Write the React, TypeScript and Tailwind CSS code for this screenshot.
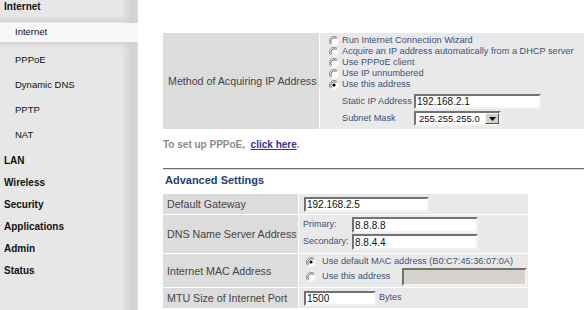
import React from 'react';

const Radio = ({ checked = false }: { checked?: boolean }) => (
    <svg width="10" height="10" viewBox="0 0 12 12" className="shrink-0">
        <circle cx="6" cy="6" r="4.6" fill="#ffffff" />
        <path d="M10 2 A5.5 5.5 0 0 0 2 10" fill="none" stroke="#8a8a8a" strokeWidth="1.1" />
        <path d="M2 10 A5.5 5.5 0 0 0 10 2" fill="none" stroke="#f6f6f6" strokeWidth="1.1" />
        <path d="M9 3 A4.3 4.3 0 0 0 3 9" fill="none" stroke="#4a4a4a" strokeWidth="1" />
        {checked && <circle cx="6" cy="6" r="1.9" fill="#000000" />}
    </svg>
);

const Field = ({ value = '', width, height = 15, disabled = false }: { value?: string; width: number; height?: number; disabled?: boolean }) => (
    <input
        readOnly
        value={value}
        style={{ width, height }}
        className={`shrink-0 border-2 border-t-[#727272] border-l-[#727272] border-r-[#f2f2f2] border-b-[#f2f2f2] px-[1px] text-[10px] leading-none text-[#111] outline-none ${disabled ? 'bg-[#d6d3cc]' : 'bg-white'}`}
    />
);

const Select = () => (
    <div className="flex h-[15px] w-[87px] shrink-0 border-2 border-t-[#727272] border-l-[#727272] border-r-[#f2f2f2] border-b-[#f2f2f2] bg-white">
        <span className="flex-1 overflow-hidden whitespace-nowrap pl-[3px] text-[9.5px] leading-[11px] text-[#111]">255.255.255.0</span>
        <div className="flex w-[14px] items-center justify-center border border-t-[#f4f4f4] border-l-[#f4f4f4] border-r-[#555] border-b-[#555] bg-[#d4d0c8]">
            <svg width="7" height="4" viewBox="0 0 7 4">
                <path d="M0 0 H7 L3.5 4 Z" fill="#000" />
            </svg>
        </div>
    </div>
);

const options = [
    'Run Internet Connection Wizard',
    'Acquire an IP address automatically from a DHCP server',
    'Use PPPoE client',
    'Use IP unnumbered',
    'Use this address',
];

const Sidebar = () => (
    <aside className="h-full w-[138px] shrink-0 bg-[linear-gradient(to_right,#e7e7e7_88%,#d0d0d0_96%,#dadada)] text-[#111]">
        <div className="h-[22px] bg-[linear-gradient(to_bottom,transparent_70%,#d3d3d3)] pl-[4px] pt-[1px] text-[10px] font-bold leading-[12px]">
            Internet
        </div>
        <div className="mt-[1px] flex h-[19px] items-center bg-[#f8f8f8] pl-[15px] text-[9.5px]">Internet</div>
        <div className="bg-[linear-gradient(to_bottom,#d4d4d4,transparent_7px)] pt-[6px] text-[9.5px]">
            {['PPPoE', 'Dynamic DNS', 'PPTP', 'NAT'].map((item) => (
                <div key={item} className="flex h-[25px] items-center pl-[15px]">
                    {item}
                </div>
            ))}
        </div>
        <div className="mt-[1px] text-[10px] font-bold">
            {['LAN', 'Wireless', 'Security', 'Applications', 'Admin', 'Status'].map((item) => (
                <div key={item} className="flex h-[22px] items-center pl-[4px]">
                    {item}
                </div>
            ))}
        </div>
    </aside>
);

export default function App() {
    return (
        <div className="flex h-[310px] w-[584px] overflow-hidden bg-white [font-family:'Liberation_Sans',Arial,sans-serif]">
            <Sidebar />
            <main className="min-w-0 flex-1 pl-[25px] pt-[33px]">
                {/* method of acquiring */}
                <div className="flex h-[96px] w-[422px] gap-[1px]">
                    <div className="flex w-[156px] items-center bg-[#dcdcdc] pl-[5px] text-[10.67px] text-[#454545]">
                        Method of Acquiring IP Address
                    </div>
                    <div className="flex-1 bg-[#e9e9e9] pl-[9px] pt-[2px] text-[9.2px] text-[#3c5279]">
                        {options.map((o, i) => (
                            <div key={o} className="flex h-[11px] items-center gap-[3px] leading-none">
                                <Radio checked={i === 4} />
                                <span>{o}</span>
                            </div>
                        ))}
                        <div className="mt-[3px] pl-[13px]">
                            <div className="flex h-[17px] items-center">
                                <span className="w-[72px]">Static IP Address</span>
                                <Field value="192.168.2.1" width={127} />
                            </div>
                            <div className="flex h-[17px] items-center">
                                <span className="w-[72px]">Subnet Mask</span>
                                <Select />
                            </div>
                        </div>
                    </div>
                </div>

                <p className="mt-[10px] text-[10px] font-bold leading-[12px] text-[#8c8c8c]">
                    To set up PPPoE,&nbsp; <span className="text-[#333399] underline">click here</span>.
                </p>

                <div className="mt-[17px] h-[2px] w-[422px] border-t border-t-[#6f6f6f] bg-[#d8d8d8]" />

                <h3 className="mt-[4px] pl-[2px] text-[11px] font-bold leading-[13px] text-[#233f78]">Advanced Settings</h3>

                {/* advanced settings */}
                <div className="mt-[7px] flex w-[365px] flex-col gap-[1px] text-[10.67px] text-[#454545]">
                    <div className="flex h-[20px] gap-[1px]">
                        <div className="flex w-[135px] items-center bg-[#dcdcdc] pl-[4px]">Default Gateway</div>
                        <div className="flex flex-1 items-center bg-[#e9e9e9] pl-[5px]">
                            <Field value="192.168.2.5" width={125} />
                        </div>
                    </div>
                    <div className="flex h-[38px] gap-[1px]">
                        <div className="flex w-[135px] items-center bg-[#dcdcdc] pl-[4px]">DNS Name Server Address</div>
                        <div className="flex flex-1 flex-col gap-[1px] bg-[#e9e9e9] pl-[4px] pt-[2px] text-[9px] text-[#3c5279]">
                            <div className="flex h-[16px] items-center">
                                <span className="w-[49px]">Primary:</span>
                                <Field value="8.8.8.8" width={126} height={16} />
                            </div>
                            <div className="flex h-[16px] items-center">
                                <span className="w-[49px]">Secondary:</span>
                                <Field value="8.8.4.4" width={126} height={16} />
                            </div>
                        </div>
                    </div>
                    <div className="flex h-[33px] gap-[1px]">
                        <div className="flex w-[135px] items-center bg-[#dcdcdc] pl-[4px]">Internet MAC Address</div>
                        <div className="flex-1 bg-[#e9e9e9] pl-[7px] pt-[1px] text-[9.2px] text-[#3c5279]">
                            <div className="flex h-[13px] items-center gap-[6px]">
                                <Radio checked />
                                <span>Use default MAC address (B0:C7:45:36:07:0A)</span>
                            </div>
                            <div className="flex h-[18px] items-center gap-[6px]">
                                <Radio />
                                <span className="w-[74px]">Use this address</span>
                                <Field width={125} height={18} disabled />
                            </div>
                        </div>
                    </div>
                    <div className="flex h-[20px] gap-[1px]">
                        <div className="flex w-[135px] items-center bg-[#dcdcdc] pl-[4px]">MTU Size of Internet Port</div>
                        <div className="flex flex-1 items-center bg-[#e9e9e9] pl-[5px]">
                            <Field value="1500" width={72} />
                            <span className="ml-[3px] text-[9px] text-[#3c5279]">Bytes</span>
                        </div>
                    </div>
                </div>
            </main>
        </div>
    );
}
